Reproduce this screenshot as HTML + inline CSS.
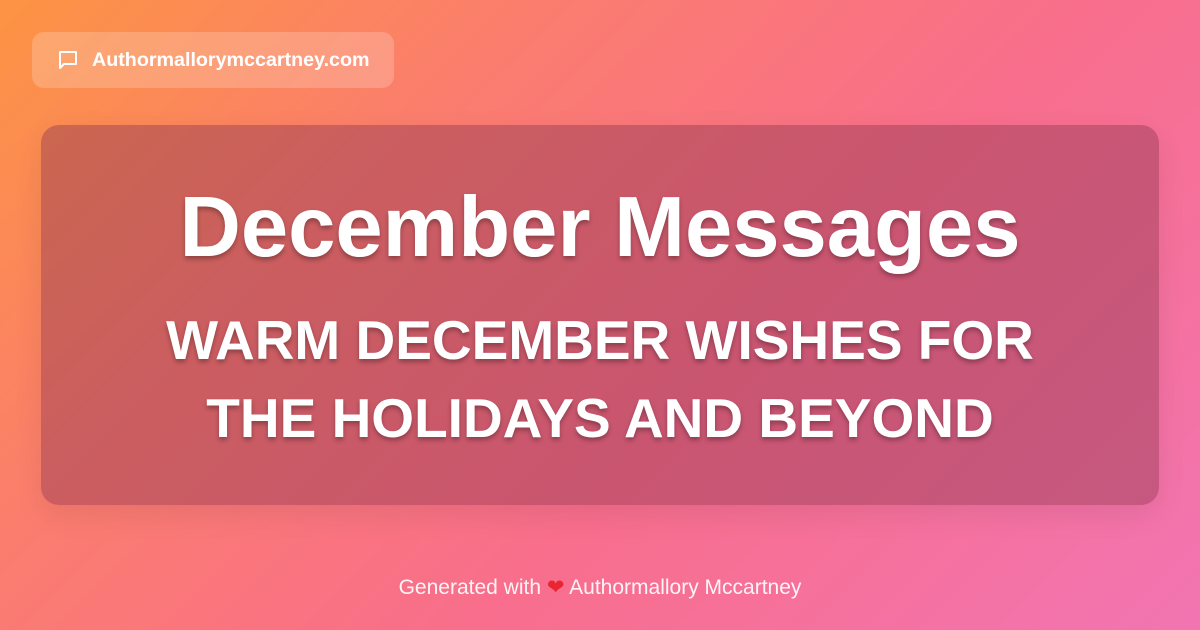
<!DOCTYPE html>
<html><head><meta charset="utf-8"><style>
body{margin:0;width:1200px;height:630px;overflow:hidden;font-family:"Liberation Sans",sans-serif;}
.bg{position:absolute;inset:0;background:linear-gradient(135deg,#fd9443 0%,#fb7d6e 30%,#f86e8c 60%,#f275b2 100%);}
.pill{position:absolute;left:32px;top:32px;width:362px;height:56px;border-radius:12px;background:rgba(255,255,255,0.2);color:#fff;font-weight:bold;font-size:19.7px;}
.pill span{position:absolute;left:60px;top:17px;}
.card{position:absolute;left:41px;top:125px;width:1118px;height:380px;border-radius:18px;background:rgba(145,55,80,0.45);box-shadow:0 10px 30px rgba(0,0,0,0.08);color:#fff;text-align:center;}
h1{margin:0;position:absolute;top:54px;width:100%;font-size:85px;font-weight:bold;text-shadow:0 3px 5px rgba(0,0,0,0.3);}
h2{margin:0;position:absolute;top:176px;width:100%;font-size:55px;line-height:78px;font-weight:bold;text-shadow:0 3px 5px rgba(0,0,0,0.3);}
.foot{position:absolute;top:575px;width:100%;text-align:center;color:#fff;font-size:21px;opacity:.93;}
</style></head><body>
<div class="bg"></div>
<div class="pill"><svg style="position:absolute;left:24px;top:16px" width="24" height="24" viewBox="0 0 24 24" fill="none" stroke="#fff" stroke-width="2" stroke-linejoin="round"><path d="M4 4h16v12H8l-4 4z"/></svg><span>Authormallorymccartney.com</span></div>
<div class="card">
<h1>December Messages</h1>
<h2>WARM DECEMBER WISHES FOR<br>THE HOLIDAYS AND BEYOND</h2>
</div>
<div class="foot">Generated with <span style="color:#e8202c">❤</span> Authormallory Mccartney</div>
</body></html>
